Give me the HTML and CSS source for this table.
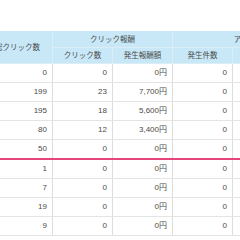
FILE: index.html
```html
<!DOCTYPE html>
<html lang="ja">
<head>
<meta charset="utf-8">
<link rel="stylesheet" href="styles.css">
</head>
<body>
<div class="page">
  <table class="grid">
    <colgroup>
      <col class="c-first">
      <col class="c-std">
      <col class="c-std">
      <col class="c-std">
      <col class="c-std">
      <col class="c-std">
    </colgroup>
    <thead>
      <tr class="h1">
        <th rowspan="2">総クリック数</th>
        <th colspan="2">クリック報酬</th>
        <th colspan="3" class="grp">アフィリエイト報酬</th>
      </tr>
      <tr class="h2">
        <th>クリック数</th>
        <th>発生報酬額</th>
        <th>発生件数</th>
        <th>発生報酬額</th>
        <th>確定件数</th>
      </tr>
    </thead>
    <tbody>
      <tr><td>0</td><td>0</td><td>0円</td><td>0</td><td>0円</td><td>0</td></tr>
      <tr><td>199</td><td>23</td><td>7,700円</td><td>0</td><td>0円</td><td>0</td></tr>
      <tr><td>195</td><td>18</td><td>5,600円</td><td>0</td><td>0円</td><td>0</td></tr>
      <tr><td>80</td><td>12</td><td>3,400円</td><td>0</td><td>0円</td><td>0</td></tr>
      <tr class="mark"><td>50</td><td>0</td><td>0円</td><td>0</td><td>0円</td><td>0</td></tr>
      <tr><td>1</td><td>0</td><td>0円</td><td>0</td><td>0円</td><td>0</td></tr>
      <tr><td>7</td><td>0</td><td>0円</td><td>0</td><td>0円</td><td>0</td></tr>
      <tr><td>19</td><td>0</td><td>0円</td><td>0</td><td>0円</td><td>0</td></tr>
      <tr><td>9</td><td>0</td><td>0円</td><td>0</td><td>0円</td><td>0</td></tr>
    </tbody>
  </table>
</div>
</body>
</html>
```
FILE: styles.css
```css
html, body {
  margin: 0;
  padding: 0;
  background: #fff;
}

body {
  font-family: "Liberation Sans", "Noto Sans CJK JP", sans-serif;
}

.page {
  width: 240px;
  height: 240px;
  overflow: hidden;
  padding-top: 31px;
  box-sizing: border-box;
}

.grid {
  border-collapse: collapse;
  table-layout: fixed;
  width: 370px;
  margin-left: -18px;
}

.c-first {
  width: 70px;
}

.c-std {
  width: 60px;
}

.grid th {
  background: #c8e8f8;
  color: #4a4a4a;
  font-weight: normal;
  font-size: 7.5px;
  line-height: 9px;
  padding: 0;
  border: 1px solid #dcedf6;
  border-top: none;
  text-align: center;
  white-space: nowrap;
}

.h1 th {
  height: 16px;
}

.h2 th {
  height: 15px;
}

.grid th.grp {
  text-indent: 10px;
}

.grid td {
  font-size: 8px;
  line-height: 9px;
  color: #4a4a4a;
  text-align: right;
  padding: 0 5px 1px 0;
  height: 17px;
  border-bottom: 1px solid #e4e4e4;
  border-right: 1px solid #dddddd;
  white-space: nowrap;
}

.grid tr.mark td {
  border-bottom: 2px solid #e3457c;
}
```
